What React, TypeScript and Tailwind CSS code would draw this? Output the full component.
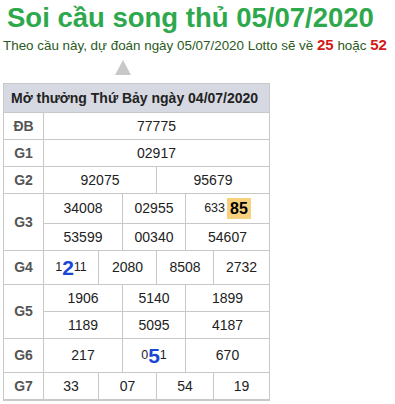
import React from "react";

const F = { fontFamily: '"Liberation Sans", Arial, sans-serif' };

function Cell({ children, className = "" }: { children?: React.ReactNode; className?: string }) {
  return (
    <div className={"bg-white flex items-center justify-center text-[14px] text-[#222] " + className}>
      {children}
    </div>
  );
}

function Label({ children, className = "" }: { children?: React.ReactNode; className?: string }) {
  return (
    <div className={"bg-white flex items-center justify-center text-[14px] font-bold text-[#555] " + className}>
      {children}
    </div>
  );
}

export default function App() {
  return (
    <div className="bg-white w-[395px] h-[404px] overflow-hidden" style={F}>
      <div className="pt-[2px] pl-[7px] text-[27.5px] leading-[32px] font-bold text-[#2ea84c] whitespace-nowrap">
        Soi cầu song thủ 05/07/2020
      </div>
      <div className="mt-[2px] pl-[3px] text-[13.4px] leading-[18px] text-[#2a5a22] whitespace-nowrap">
        Theo cầu này, dự đoán ngày 05/07/2020 Lotto sẽ về{" "}
        <span className="text-[15px] font-bold text-[#d41a1a]">25</span> hoặc{" "}
        <span className="text-[15px] font-bold text-[#d41a1a]">52</span>
      </div>
      <div className="mt-[5px] ml-[115px] w-0 h-0 border-l-[8px] border-r-[8px] border-b-[15px] border-l-transparent border-r-transparent border-b-[#c8c8c8]" />
      <div className="mt-[8px] ml-[3px] w-[267px] grid grid-cols-[39px_54px_23px_33px_28px_27px_55px] grid-rows-[28px_26px_26px_26px_29px_26px_33px_26px_26px_33px_26px] gap-px p-px bg-[#c8c8c8] border-b border-b-[#c8c8c8]">
        <div className="col-span-7 bg-[#d6d9e1] flex items-center pl-[7px] text-[14px] font-bold text-[#222]">
          Mở thưởng Thứ Bảy ngày 04/07/2020
        </div>

        <Label>ĐB</Label>
        <Cell className="col-span-6">77775</Cell>

        <Label>G1</Label>
        <Cell className="col-span-6">02917</Cell>

        <Label>G2</Label>
        <Cell className="col-span-3">92075</Cell>
        <Cell className="col-span-3">95679</Cell>

        <Label className="row-span-2">G3</Label>
        <Cell className="col-span-2">34008</Cell>
        <Cell className="col-span-2">02955</Cell>
        <Cell className="col-span-2">
          <span className="text-[12.5px]">633</span>
          <span className="ml-[2px] bg-[#f8d17f] px-[3px] h-[21px] flex items-center text-[16px] font-bold text-black">85</span>
        </Cell>
        <Cell className="col-span-2">53599</Cell>
        <Cell className="col-span-2">00340</Cell>
        <Cell className="col-span-2">54607</Cell>

        <Label>G4</Label>
        <Cell>
          <span className="text-[12.5px]">1</span>
          <span className="text-[21px] leading-[24px] font-bold text-[#1a46d6]">2</span>
          <span className="text-[12.5px]">11</span>
        </Cell>
        <Cell className="col-span-2">2080</Cell>
        <Cell className="col-span-2">8508</Cell>
        <Cell>2732</Cell>

        <Label className="row-span-2">G5</Label>
        <Cell className="col-span-2">1906</Cell>
        <Cell className="col-span-2">5140</Cell>
        <Cell className="col-span-2">1899</Cell>
        <Cell className="col-span-2">1189</Cell>
        <Cell className="col-span-2">5095</Cell>
        <Cell className="col-span-2">4187</Cell>

        <Label>G6</Label>
        <Cell className="col-span-2">217</Cell>
        <Cell className="col-span-2">
          <span className="text-[12.5px]">0</span>
          <span className="text-[21px] leading-[24px] font-bold text-[#1a46d6]">5</span>
          <span className="text-[12.5px]">1</span>
        </Cell>
        <Cell className="col-span-2">670</Cell>

        <Label>G7</Label>
        <Cell>33</Cell>
        <Cell className="col-span-2">07</Cell>
        <Cell className="col-span-2">54</Cell>
        <Cell>19</Cell>
      </div>
    </div>
  );
}
